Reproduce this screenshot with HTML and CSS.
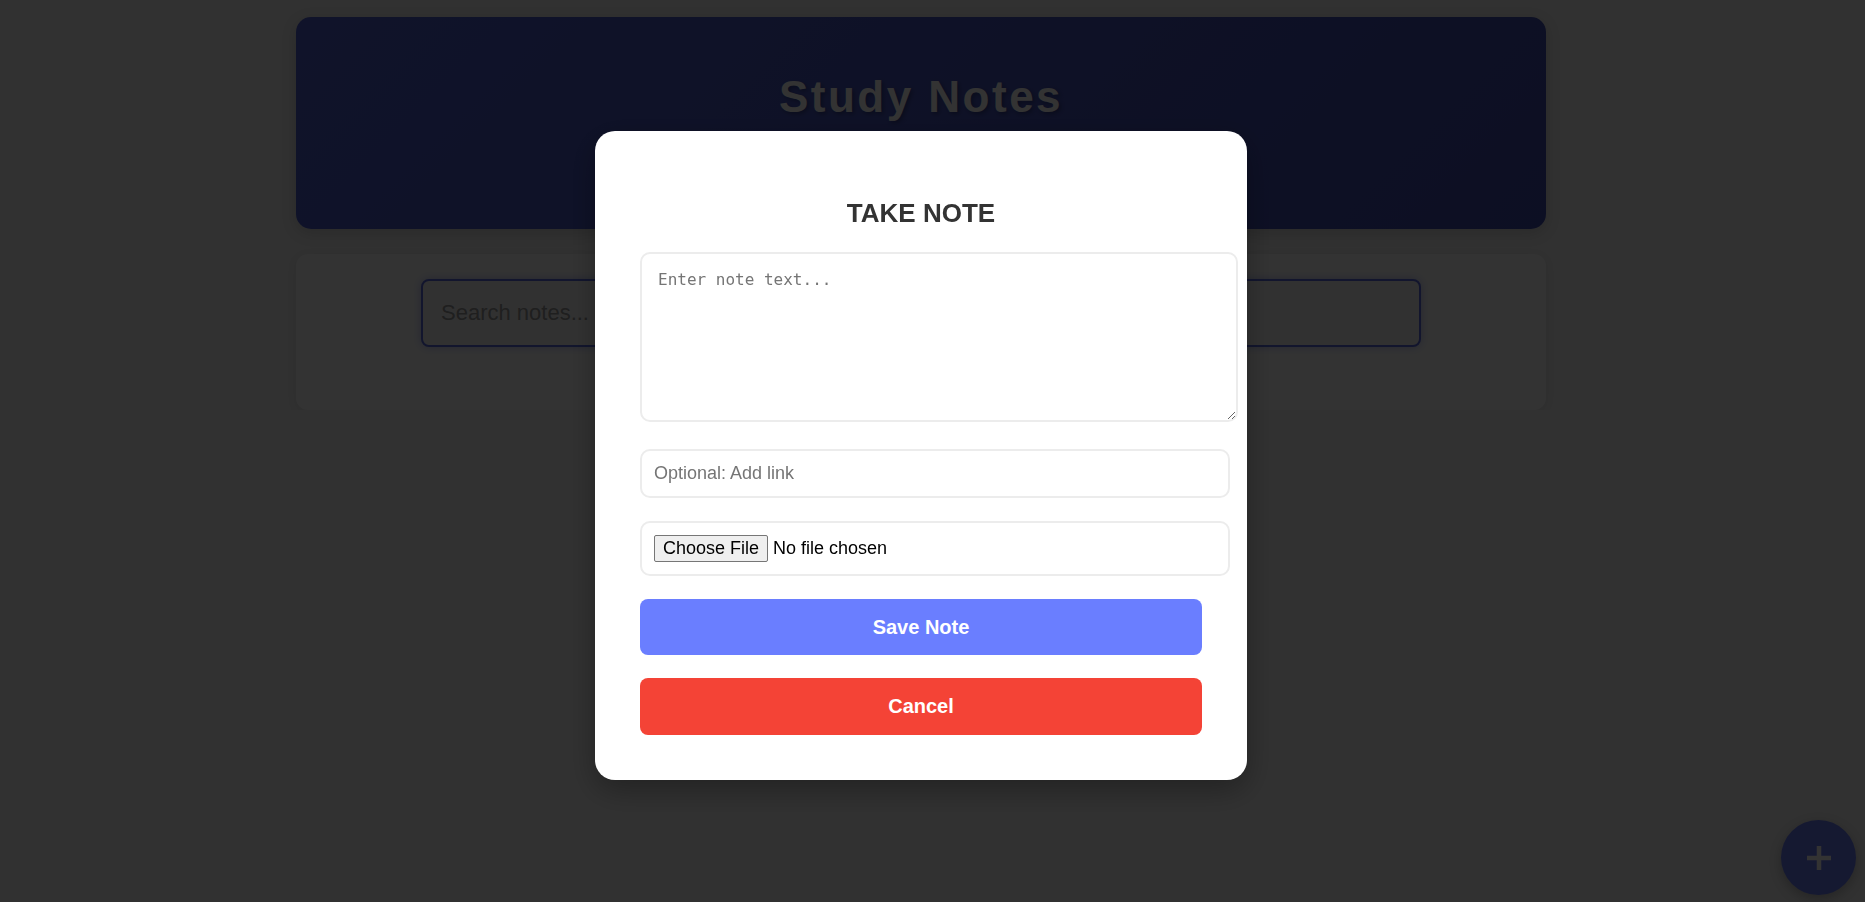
FILE: index.html
```html
<!DOCTYPE html>
<html lang="en">
<head>
<meta charset="utf-8">
<title>Study Notes</title>
<link rel="stylesheet" href="styles.css">
</head>
<body>
<div class="page">
  <div class="container">
    <header class="header">
      <h1 class="title">Study Notes</h1>
    </header>
    <section class="search-card">
      <input class="search-input" type="text" placeholder="Search notes...">
    </section>
  </div>
</div>

<button class="fab" aria-label="Add note">
  <svg width="26" height="26" viewBox="0 0 26 26"><path d="M13 1v24M1 13h24" stroke="#fff" stroke-width="4.5" fill="none"/></svg>
</button>

<div class="overlay">
  <div class="modal">
    <h2 class="modal-title">TAKE NOTE</h2>
    <textarea class="note-text" placeholder="Enter note text..."></textarea>
    <input class="note-link" type="text" placeholder="Optional: Add link">
    <input class="note-file" type="file">
    <button class="btn btn-save">Save Note</button>
    <button class="btn btn-cancel">Cancel</button>
  </div>
</div>
</body>
</html>
```

FILE: styles.css
```css
body {
  margin: 0;
  background: #f2f2f2;
  font-family: "Liberation Sans", Arial, sans-serif;
}

.page {
  padding: 17px 23px 0 0;
}

.container {
  max-width: 1250px;
  margin: 0 auto;
}

.header {
  height: 212px;
  box-sizing: border-box;
  padding: 55px 20px 0;
  border-radius: 15px;
  background: linear-gradient(135deg, #5060d0 0%, #3f4cae 100%);
  text-align: center;
  box-shadow: 0 4px 15px rgba(0, 0, 0, 0.15);
}

.title {
  margin: 0;
  font-size: 44px;
  font-weight: bold;
  color: #fff;
  letter-spacing: 2.5px;
  text-shadow: 2px 2px 4px rgba(0, 0, 0, 0.3);
}

.search-card {
  margin-top: 25px;
  background: #fff;
  border-radius: 12px;
  padding: 25px 0 63px;
  display: flex;
  justify-content: center;
  box-shadow: 0 2px 10px rgba(0, 0, 0, 0.08);
}

.search-input {
  width: 80%;
  box-sizing: border-box;
  padding: 19px 18px;
  font-family: inherit;
  font-size: 22px;
  border: 2px solid #5a6ae0;
  border-radius: 8px;
  background: #f6f6f6;
  box-shadow: 0 0 10px rgba(90, 106, 224, 0.45);
  outline: none;
}

.search-input::placeholder {
  color: #999;
}

.fab {
  position: fixed;
  right: 9px;
  bottom: 7px;
  width: 75px;
  height: 75px;
  border-radius: 50%;
  border: none;
  background: #6a7cf6;
  display: flex;
  align-items: center;
  justify-content: center;
  box-shadow: 0 4px 12px rgba(0, 0, 0, 0.25);
  padding: 0;
}

.overlay {
  position: fixed;
  inset: 0;
  box-sizing: border-box;
  padding: 8px 23px 0 0;
  background: rgba(0, 0, 0, 0.8);
  display: flex;
  align-items: center;
  justify-content: center;
  z-index: 10;
}

.modal {
  width: 562px;
  padding: 45px;
  background: #fff;
  border-radius: 20px;
  box-shadow: 0 10px 30px rgba(0, 0, 0, 0.3);
  display: flex;
  flex-direction: column;
  align-items: flex-start;
}

.modal-title {
  align-self: stretch;
  text-align: center;
  margin: 22px 0 23px;
  font-size: 26px;
  font-weight: bold;
  color: #333;
}

.note-text {
  display: block;
  width: 100%;
  height: 134px;
  padding: 16px;
  margin: 0 0 27px;
  border: 2px solid #ececec;
  border-radius: 10px;
  font-family: "DejaVu Sans Mono", monospace;
  font-size: 16px;
  outline: none;
}

.note-text::placeholder {
  color: #757575;
}

.note-link,
.note-file {
  display: block;
  width: 100%;
  padding: 12px;
  margin: 0 0 23px;
  border: 2px solid #ececec;
  border-radius: 10px;
  font-family: inherit;
  font-size: 18px;
  background: #fff;
  outline: none;
}

.note-link::placeholder {
  color: #757575;
}

.note-file::file-selector-button {
  font: inherit;
  color: #000;
  padding: 2px 8px;
  margin-right: 5px;
  background: #efefef;
  border: 1px solid #767676;
  border-radius: 2px;
}

.btn {
  width: 100%;
  padding: 16px;
  border: none;
  border-radius: 8px;
  font-family: inherit;
  font-size: 20px;
  font-weight: bold;
  line-height: 24px;
  color: #fff;
  margin: 0 0 23px;
}

.btn-save {
  background: #6a7eff;
}

.btn-cancel {
  background: #f44336;
  margin-bottom: 0;
  padding-bottom: 17px;
}
```
